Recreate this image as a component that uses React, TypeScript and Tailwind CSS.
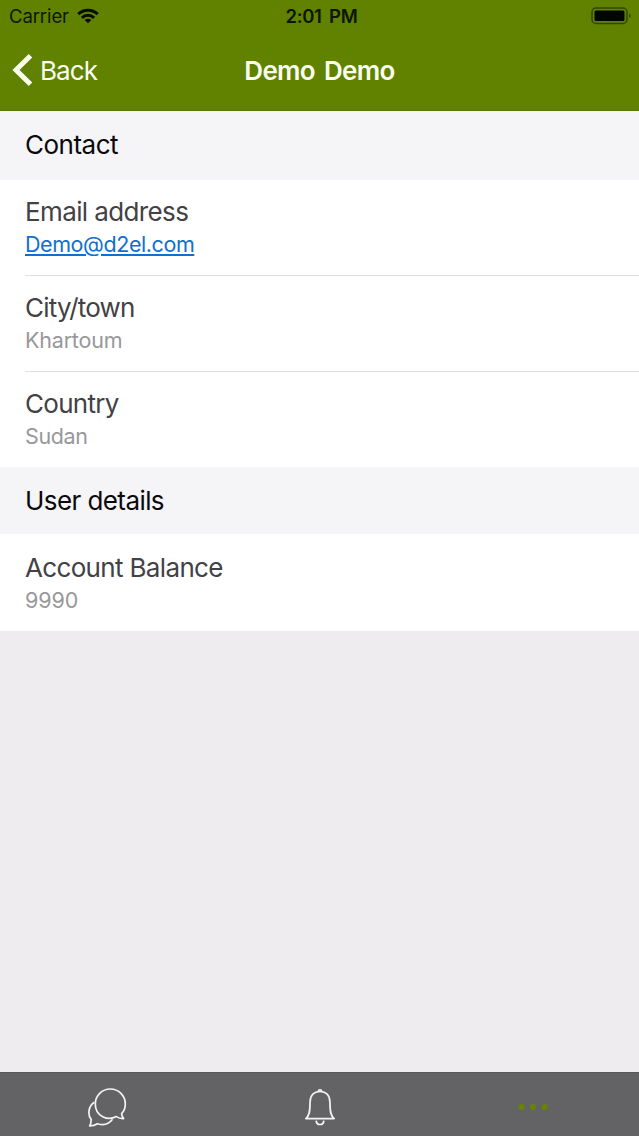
import React from 'react';

interface Field {
  label: string;
  labelClass: string;
  value: string;
  valueClass: string;
  link?: boolean;
}

const contactFields: Field[] = [
  { label: 'Email address', labelClass: 'tracking-[-0.62px]', value: 'Demo@d2el.com', valueClass: 'tracking-[-0.42px]', link: true },
  { label: 'City/town', labelClass: 'tracking-[-0.8px]', value: 'Khartoum', valueClass: 'tracking-[-0.2px]' },
  { label: 'Country', labelClass: 'tracking-[-0.7px]', value: 'Sudan', valueClass: 'tracking-[-0.35px]' },
];

const userFields: Field[] = [
  { label: 'Account Balance', labelClass: 'tracking-[-0.66px]', value: '9990', valueClass: 'tracking-[-0.1px]' },
];

const StatusBar: React.FC = () => (
  <div className="relative flex h-8 items-center justify-between pl-[9px] pr-[7px] text-[18.5px] text-[#0c1600]">
    <div className="flex items-center gap-2">
      <span className="pt-0.5 tracking-[-0.1px]">Carrier</span>
      <svg width="22" height="16" viewBox="0 0 22 16" fill="none" stroke="#080d00" strokeWidth="3">
        <path d="M1.2 6.2C6.8.9 15.2.9 20.8 6.2" />
        <path d="M4.9 9.9C8.4 6.5 13.6 6.5 17.1 9.9" />
        <path d="M11 15.2L7.7 12.1C9.6 10.4 12.4 10.4 14.3 12.1Z" fill="#080d00" stroke="none" />
      </svg>
    </div>
    <span className="absolute left-[285.5px] pt-0.5 font-semibold tracking-[-0.4px] [word-spacing:3.5px]">2:01 PM</span>
    <svg width="41" height="18" viewBox="0 0 41 18">
      <rect x="1" y="1" width="35" height="15.5" rx="4" fill="none" stroke="#324500" strokeWidth="1.5" />
      <rect x="3.5" y="3.5" width="30" height="10.5" rx="1.5" fill="#020600" />
      <path d="M38.2 6.5C40.2 7.3 40.2 10.2 38.2 11Z" fill="#324500" />
    </svg>
  </div>
);

const SectionTitle: React.FC<{ children: React.ReactNode; className: string }> = ({ children, className }) => (
  <h2 className={`flex items-center bg-[#f5f4f7] pl-[25px] text-[26px] text-[#0a0a0b] ${className}`}>{children}</h2>
);

const FieldRow: React.FC<{ field: Field; last: boolean }> = ({ field, last }) => (
  <div className={`ml-[25px] pt-4 ${last ? 'h-[95px]' : 'h-24 border-b border-[#dfdee1]'}`}>
    <div className={`text-[26px] leading-8 text-[#424145] ${field.labelClass}`}>{field.label}</div>
    {field.link ? (
      <a href={`mailto:${field.value}`} className={`block w-fit text-[21.5px] leading-8 text-[#1070cf] underline decoration-[1.5px] underline-offset-2 ${field.valueClass}`}>
        {field.value}
      </a>
    ) : (
      <div className={`text-[21.5px] leading-8 text-[#98979a] ${field.valueClass}`}>{field.value}</div>
    )}
  </div>
);

export default function App() {
  return (
    <div className="flex h-[1136px] w-[639px] flex-col overflow-hidden whitespace-nowrap bg-[#eeecef] font-['Inter',sans-serif]">
      <header className="h-[111px] shrink-0 border-b border-[#587600] bg-[#608200]">
        <StatusBar />
        <div className="relative flex h-[76px] items-center justify-center">
          <button className="absolute left-3 flex items-center gap-[7px] text-[26px] text-[#fbfff0]">
            <svg width="21" height="32" viewBox="0 0 21 32" fill="none" stroke="currentColor" strokeWidth="5">
              <path d="M18.5 1.8L4 16L18.5 30.2" />
            </svg>
            <span className="tracking-[-0.9px]">Back</span>
          </button>
          <h1 className="text-[26px] font-semibold tracking-[-0.65px] text-[#fbfff0] [word-spacing:3px]">Demo Demo</h1>
        </div>
      </header>

      <main className="flex-1">
        <SectionTitle className="h-[69px] pb-0.5 tracking-[-0.5px]">Contact</SectionTitle>
        <section className="bg-white">
          {contactFields.map((field, i) => (
            <FieldRow key={field.label} field={field} last={i === contactFields.length - 1} />
          ))}
        </section>
        <SectionTitle className="h-[67px] tracking-[-0.58px]">User details</SectionTitle>
        <section className="bg-white pt-0.5">
          {userFields.map((field) => (
            <FieldRow key={field.label} field={field} last />
          ))}
        </section>
      </main>

      <nav className="grid h-16 shrink-0 grid-cols-3 items-center justify-items-center border-t border-[#58575a] bg-[#636265] pt-[5px]">
        <svg width="40" height="40" viewBox="0 0 40 40" fill="none" stroke="#f4f4f4" strokeWidth="1.7" strokeLinejoin="round">
          <path d="M36.6 31.6C33.5 31.8 31 30.7 29.3 29.6C21 34.2 8.3 29.5 8.3 17C8.3 8.500 15 2 23.300 2C31.700 2 38.300 8.500 38.300 17C38.300 21 37 24.200 34.600 26.700C34.800 28.700 35.500 30.300 36.600 31.600Z" />
          <path d="M7.300 15.300C1.200 19.500.4 27.500 4.200 32.600C4.200 35 3.700 37 2.700 38.900C5.800 38.900 8.500 38 10.500 36.700C16.500 38.800 22 36.900 25.500 32.300" />
        </svg>
        <svg width="34" height="38" viewBox="0 0 34 38" fill="none" stroke="#f4f4f4" strokeWidth="1.7" strokeLinejoin="round">
          <path d="M2.800 30.600C6.500 28 7 23 7 15C7 7.500 11 3.500 17 3.500C23 3.500 27 7.500 27 15C27 23 27.500 28 31.200 30.600Z" />
          <path d="M15.500 3.500V2.800C15.500 1.500 18.500 1.500 18.500 2.800V3.500" />
          <path d="M13.200 32.600C13.400 37.800 20.600 37.800 20.800 32.600" />
        </svg>
        <svg width="32" height="8" viewBox="0 0 32 8" fill="#678300">
          <circle cx="4.500" cy="4" r="3.100" />
          <circle cx="16" cy="4" r="3.100" />
          <circle cx="27.500" cy="4" r="3.100" />
        </svg>
      </nav>
    </div>
  );
}
